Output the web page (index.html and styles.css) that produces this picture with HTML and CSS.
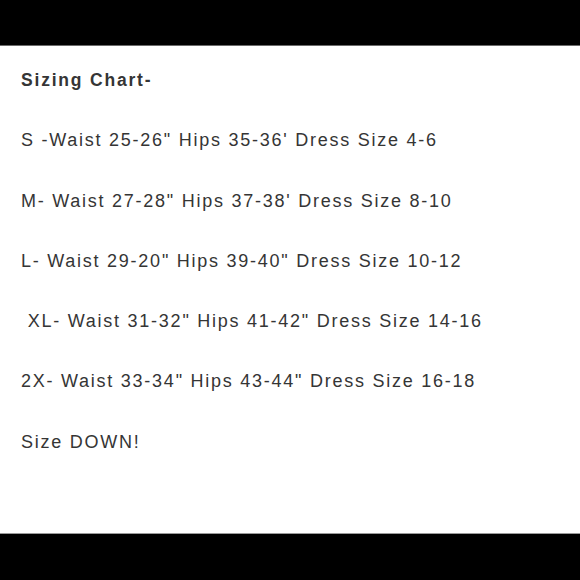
FILE: index.html
```html
<!DOCTYPE html>
<html>
<head>
<meta charset="utf-8">
<link rel="stylesheet" href="styles.css">
</head>
<body>
<div class="frame">
  <div class="bar bar-top"></div>
  <div class="content">
    <div class="line title">Sizing Chart-</div>
    <div class="line">S -Waist 25-26" Hips 35-36' Dress Size 4-6</div>
    <div class="line">M- Waist 27-28" Hips 37-38' Dress Size 8-10</div>
    <div class="line">L- Waist 29-20" Hips 39-40" Dress Size 10-12</div>
    <div class="line">&nbsp;XL- Waist 31-32" Hips 41-42" Dress Size 14-16</div>
    <div class="line">2X- Waist 33-34" Hips 43-44" Dress Size 16-18</div>
    <div class="line">Size DOWN!</div>
  </div>
  <div class="bar bar-bottom"></div>
</div>
</body>
</html>
```
FILE: styles.css
```css
html, body {
  margin: 0;
  padding: 0;
  background: #fff;
}
.frame {
  width: 580px;
  height: 580px;
  display: flex;
  flex-direction: column;
}
.bar {
  background: #000;
}
.bar-top {
  height: 45px;
  border-bottom: 1px solid #6a6a6a;
}
.bar-bottom {
  height: 46px;
  border-top: 1px solid #9a9a9a;
}
.content {
  flex: 1;
  padding: 4px 0 0 21px;
  font-family: "Liberation Sans", Arial, sans-serif;
  color: #353535;
  font-size: 18px;
  letter-spacing: 1.75px;
}
.line {
  line-height: 60.3px;
  white-space: pre;
}
.title {
  font-weight: bold;
  font-size: 17.5px;
  letter-spacing: 1.8px;
}
```
